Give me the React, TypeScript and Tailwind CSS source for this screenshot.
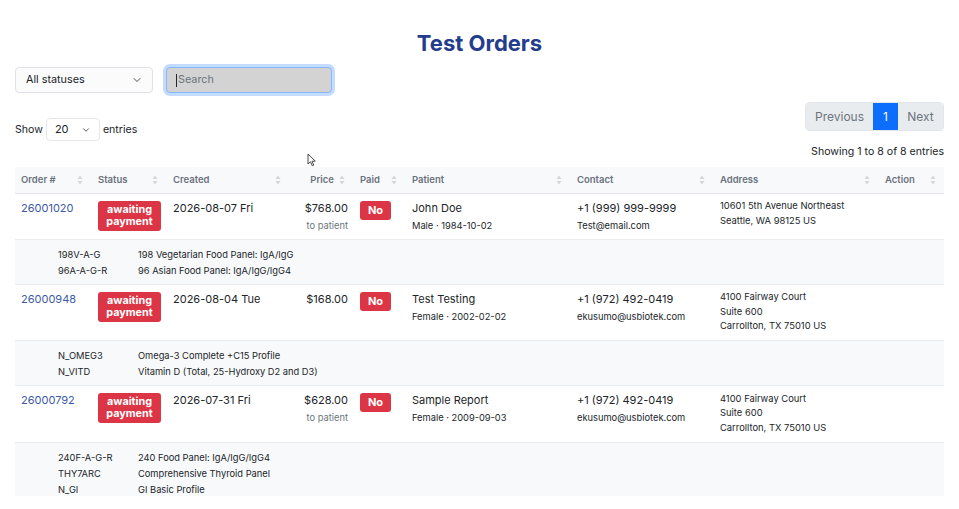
import { Fragment, type ReactNode } from "react";
import { ChevronDown } from "lucide-react";

type Order = {
  id: string;
  created: string;
  price: string;
  toPatient: boolean;
  patient: string;
  patientInfo: string;
  phone: string;
  email: string;
  address: string[];
  tests: [string, string][];
};

const orders: Order[] = [
  {
    id: "26001020",
    created: "2026-08-07 Fri",
    price: "$768.00",
    toPatient: true,
    patient: "John Doe",
    patientInfo: "Male · 1984-10-02",
    phone: "+1 (999) 999-9999",
    email: "Test@email.com",
    address: ["10601 5th Avenue Northeast", "Seattle, WA 98125 US"],
    tests: [
      ["198V-A-G", "198 Vegetarian Food Panel: IgA/IgG"],
      ["96A-A-G-R", "96 Asian Food Panel: IgA/IgG/IgG4"],
    ],
  },
  {
    id: "26000948",
    created: "2026-08-04 Tue",
    price: "$168.00",
    toPatient: false,
    patient: "Test Testing",
    patientInfo: "Female · 2002-02-02",
    phone: "+1 (972) 492-0419",
    email: "ekusumo@usbiotek.com",
    address: ["4100 Fairway Court", "Suite 600", "Carrollton, TX 75010 US"],
    tests: [
      ["N_OMEG3", "Omega-3 Complete +C15 Profile"],
      ["N_VITD", "Vitamin D (Total, 25-Hydroxy D2 and D3)"],
    ],
  },
  {
    id: "26000792",
    created: "2026-07-31 Fri",
    price: "$628.00",
    toPatient: true,
    patient: "Sample Report",
    patientInfo: "Female · 2009-09-03",
    phone: "+1 (972) 492-0419",
    email: "ekusumo@usbiotek.com",
    address: ["4100 Fairway Court", "Suite 600", "Carrollton, TX 75010 US"],
    tests: [
      ["240F-A-G-R", "240 Food Panel: IgA/IgG/IgG4"],
      ["THY7ARC", "Comprehensive Thyroid Panel"],
      ["N_GI", "GI Basic Profile"],
    ],
  },
];

function SortIcon() {
  return (
    <svg width="6" height="10" viewBox="0 0 6 10" className="absolute right-[9px] top-1/2 -translate-y-1/2">
      <path d="M3 0.5 L5.5 4 H0.5 Z" fill="#d4d7db" />
      <path d="M3 9.5 L5.5 6 H0.5 Z" fill="#d4d7db" />
    </svg>
  );
}

function Th({ label, right }: { label: string; right?: boolean }) {
  return (
    <th
      className={`relative h-[26px] px-[6px] text-[9.5px] font-semibold text-[#6b7280] border-b border-[#e5e7eb] ${
        right ? "text-right pr-[20px]" : "text-left"
      }`}
    >
      {label}
      <SortIcon />
    </th>
  );
}

function Badge({ children }: { children: ReactNode }) {
  return (
    <div className="flex">
      <span className="block bg-[#dc3545] text-white font-bold rounded-[3px] text-center text-[10.8px] leading-[12px] w-[63px] py-[3px]">
        {children}
      </span>
    </div>
  );
}

export default function App() {
  return (
    <div
      className="relative w-[959px] h-[509px] bg-white overflow-hidden text-[#212529] px-[15px]"
      style={{ fontFamily: "Inter, 'Noto Sans', sans-serif" }}
    >
      <h1 className="pt-[29px] text-center text-[22px] leading-[28px] font-bold text-[#233d8c]">
        Test Orders
      </h1>

      {/* filters */}
      <div className="mt-[10px] flex items-center gap-[13px]">
        <div className="w-[138px] h-[26px] flex items-center justify-between pl-[10px] pr-[9px] rounded-[4px] border border-[#dee2e6] bg-[#fbfbfc] text-[10.8px]">
          <span>All statuses</span>
          <ChevronDown size={12} strokeWidth={1.8} className="text-[#343a40]" />
        </div>
        <div className="w-[166px] h-[26px] flex items-center rounded-[4px] border border-[#86b7fe] bg-[#d3d3d3] shadow-[0_0_0_3px_rgba(13,110,253,0.25)] px-[9px] text-[10.8px] text-[#6c757d]">
          <span className="w-px h-[13px] bg-[#212529] mr-[1px]" />
          Search
        </div>
      </div>

      {/* length + pagination */}
      <div className="mt-[9px] flex justify-between items-start">
        <div className="mt-[16px] flex items-center text-[10.6px]">
          <span>Show</span>
          <div className="ml-[3px] w-[54px] h-[23px] flex items-center justify-between pl-[8px] pr-[8px] rounded-[4px] border border-[#e5e7eb] bg-white text-[11px]">
            <span>20</span>
            <ChevronDown size={10} strokeWidth={2} className="text-[#343a40]" />
          </div>
          <span className="ml-[3px]">entries</span>
        </div>
        <div className="flex flex-col items-end">
          <div className="flex h-[29px] rounded-[4px] overflow-hidden border border-[#e2e5e9] text-[12px]">
            <span className="w-[67px] flex items-center justify-center bg-[#e9ecef] text-[#6c757d]">Previous</span>
            <span className="w-[25px] flex items-center justify-center bg-[#0d6efd] text-white">1</span>
            <span className="w-[45px] flex items-center justify-center bg-[#e9ecef] text-[#6c757d]">Next</span>
          </div>
          <div className="mt-[14px] text-[10.6px] leading-[14px]">Showing 1 to 8 of 8 entries</div>
        </div>
      </div>

      {/* table */}
      <div className="mt-[8px] h-[329px] overflow-hidden">
        <table className="w-[930px] table-fixed border-collapse">
          <colgroup>
            <col className="w-[77px]" />
            <col className="w-[75px]" />
            <col className="w-[123px]" />
            <col className="w-[64px]" />
            <col className="w-[52px]" />
            <col className="w-[165px]" />
            <col className="w-[143px]" />
            <col className="w-[165px]" />
            <col className="w-[66px]" />
          </colgroup>
          <thead className="bg-[#f8f9fa]">
            <tr>
              <Th label="Order #" />
              <Th label="Status" />
              <Th label="Created" />
              <Th label="Price" right />
              <Th label="Paid" />
              <Th label="Patient" />
              <Th label="Contact" />
              <Th label="Address" />
              <Th label="Action" />
            </tr>
          </thead>
          <tbody>
            {orders.map((o) => (
              <Fragment key={o.id}>
                <tr className="border-b border-[#e9ecef] align-top">
                  <td className="px-[6px] pt-[7px] pb-[8px] text-[11px] leading-[15px] text-[#3b5ba5]">{o.id}</td>
                  <td className="px-[6px] pt-[7px] pb-[8px]">
                    <Badge>
                      awaiting
                      <br />
                      payment
                    </Badge>
                  </td>
                  <td className="px-[6px] pt-[7px] text-[11px] leading-[15px]">{o.created}</td>
                  <td className="px-[6px] pt-[7px] text-right">
                    <div className="text-[11px] leading-[15px]">{o.price}</div>
                    {o.toPatient && <div className="mt-[4px] text-[9.3px] leading-[12px] text-[#6c757d]">to patient</div>}
                  </td>
                  <td className="px-[6px] pt-[7px]">
                    <div className="flex">
                      <span className="block bg-[#dc3545] text-white font-bold rounded-[3px] text-[11px] leading-[19px] w-[31px] text-center">
                        No
                      </span>
                    </div>
                  </td>
                  <td className="px-[6px] pt-[7px]">
                    <div className="text-[11px] leading-[15px]">{o.patient}</div>
                    <div className="mt-[4px] text-[9.3px] leading-[12px]">{o.patientInfo}</div>
                  </td>
                  <td className="px-[6px] pt-[7px]">
                    <div className="text-[11px] leading-[15px]">{o.phone}</div>
                    <div className="mt-[4px] text-[9.3px] leading-[12px]">{o.email}</div>
                  </td>
                  <td className="px-[6px] pt-[5.5px] pb-[6.5px] text-[9.4px] leading-[14.5px]">
                    {o.address.map((l) => (
                      <div key={l}>{l}</div>
                    ))}
                  </td>
                  <td className="px-[6px]" />
                </tr>
                <tr className="bg-[#f8f9fa] border-b border-[#e9ecef]">
                  <td colSpan={9} className="pl-[43px] pt-[7px] pb-[5px] text-[9.3px] leading-[16px]">
                    {o.tests.map(([code, name]) => (
                      <div key={code} className="flex">
                        <span className="w-[80px]">{code}</span>
                        <span>{name}</span>
                      </div>
                    ))}
                  </td>
                </tr>
              </Fragment>
            ))}
          </tbody>
        </table>
      </div>

      {/* mouse pointer */}
      <svg width="10" height="14" viewBox="0 0 10 14" className="absolute left-[307px] top-[153px]">
        <path d="M1 1 L1 11 L3.5 8.8 L5.3 12.8 L6.8 12.1 L5 8.3 L8.3 8.1 Z" fill="white" stroke="#333" strokeWidth="0.9" strokeLinejoin="round" />
      </svg>
    </div>
  );
}
